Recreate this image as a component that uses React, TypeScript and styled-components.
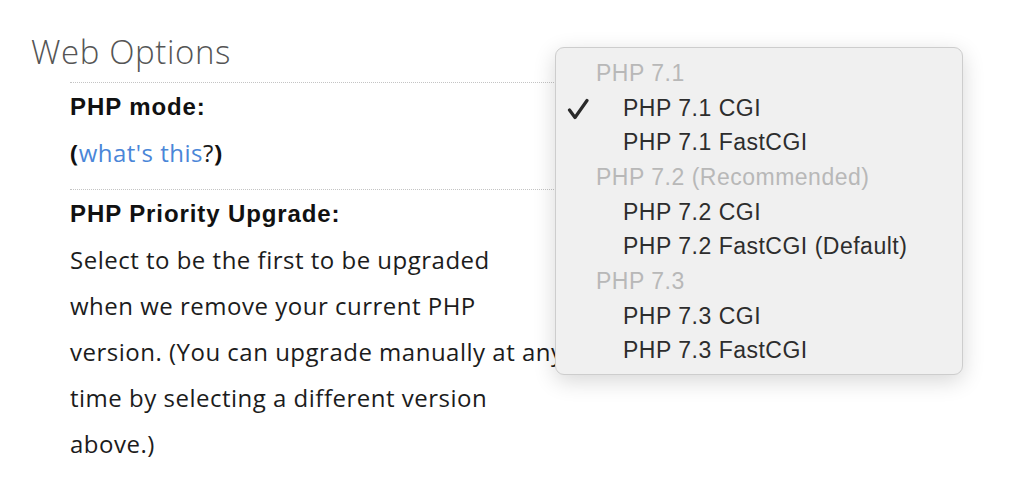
import React from "react";
import styled, { createGlobalStyle } from "styled-components";

const GlobalStyle = createGlobalStyle`
  html, body {
    margin: 0;
    padding: 0;
    background: #ffffff;
  }
  body {
    font-family: "Open Sans", "Liberation Sans", sans-serif;
  }
`;

const Page = styled.div`
  position: relative;
  width: 1024px;
  height: 479px;
  overflow: hidden;
  background: #fff;
`;

const Section = styled.div`
  padding: 31px 0 0 31px;
`;

const Heading = styled.h2`
  margin: 0;
  font-family: "Open Sans", "Liberation Sans", sans-serif;
  font-weight: 300;
  font-size: 33px;
  line-height: 42px;
  color: #555;
  letter-spacing: 0.6px;
`;

const Fields = styled.div`
  margin: 9px 0 0 39px;
  width: 560px;
`;

const Field = styled.div`
  border-top: 1px dotted #c4c4c4;
  padding: 1px 0 13px;
`;

const Label = styled.div`
  font-family: "Liberation Sans", "Noto Sans", sans-serif;
  font-weight: 700;
  font-size: 24px;
  line-height: 46px;
  color: #111;
  letter-spacing: 0.9px;
`;

const Text = styled.div`
  font-family: "Open Sans", "Liberation Sans", sans-serif;
  font-size: 24px;
  line-height: 46px;
  color: #1c1c1c;
  letter-spacing: 0.5px;
  white-space: nowrap;
`;

const Paren = styled.span`
  font-weight: 700;
  color: #111;
`;

const Link = styled.a`
  color: #4a86d8;
  text-decoration: none;
`;

const Menu = styled.div`
  position: absolute;
  left: 555px;
  top: 47px;
  width: 408px;
  height: 328px;
  box-sizing: border-box;
  padding: 8px 0;
  background: #f0f0f0;
  border: 1px solid #cdcdcd;
  border-radius: 9px;
  box-shadow: 0 6px 22px rgba(0, 0, 0, 0.16);
  font-family: "Liberation Sans", "Noto Sans", sans-serif;
  font-size: 23px;
`;

const MenuRow = styled.div<{ $header?: boolean }>`
  position: relative;
  height: 34.7px;
  display: flex;
  align-items: center;
  padding-left: ${(p) => (p.$header ? "40px" : "67px")};
  color: ${(p) => (p.$header ? "#b8b8b8" : "#2d2d2d")};
  letter-spacing: 0.5px;
  white-space: nowrap;
`;

const Check = styled.svg`
  position: absolute;
  left: 11px;
  top: 7px;
`;

type Item = { text: string; header?: boolean; checked?: boolean };

const items: Item[] = [
  { text: "PHP 7.1", header: true },
  { text: "PHP 7.1 CGI", checked: true },
  { text: "PHP 7.1 FastCGI" },
  { text: "PHP 7.2 (Recommended)", header: true },
  { text: "PHP 7.2 CGI" },
  { text: "PHP 7.2 FastCGI (Default)" },
  { text: "PHP 7.3", header: true },
  { text: "PHP 7.3 CGI" },
  { text: "PHP 7.3 FastCGI" },
];

export default function App() {
  return (
    <Page>
      <GlobalStyle />
      <Section>
        <Heading>Web Options</Heading>
        <Fields>
          <Field>
            <Label>PHP mode:</Label>
            <Text>
              <Paren>(</Paren>
              <Link href="#">what's this</Link>?<Paren>)</Paren>
            </Text>
          </Field>
          <Field>
            <Label>PHP Priority Upgrade:</Label>
            <Text>
              Select to be the first to be upgraded
              <br />
              when we remove your current PHP
              <br />
              version. (You can upgrade manually at any
              <br />
              time by selecting a different version
              <br />
              above.)
            </Text>
          </Field>
        </Fields>
      </Section>
      <Menu>
        {items.map((it) => (
          <MenuRow key={it.text} $header={it.header}>
            {it.checked && (
              <Check width="22" height="22" viewBox="0 0 22 22">
                <path
                  d="M2.5 12 L8 19.5 L20 2.5"
                  fill="none"
                  stroke="#2a2a2a"
                  strokeWidth="3.2"
                  strokeLinecap="round"
                  strokeLinejoin="round"
                />
              </Check>
            )}
            {it.text}
          </MenuRow>
        ))}
      </Menu>
    </Page>
  );
}
